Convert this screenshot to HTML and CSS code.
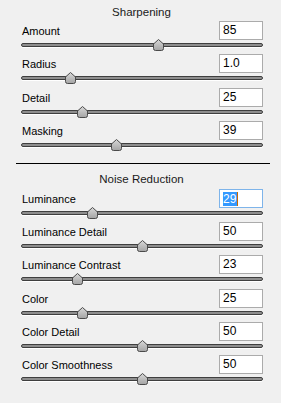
FILE: index.html
```html
<!DOCTYPE html>
<html>
<head>
<meta charset="utf-8">
<link rel="stylesheet" href="styles.css">
</head>
<body>
<svg class="defs" width="0" height="0" aria-hidden="true">
  <defs>
    <linearGradient id="tg" x1="0" y1="0" x2="0" y2="1">
      <stop offset="0" stop-color="#d8d8d8"/>
      <stop offset="1" stop-color="#a4a4a4"/>
    </linearGradient>
    <symbol id="thumb" viewBox="0 0 11 12">
      <path d="M5.5 0.5 L10.5 5 L10.5 9.5 Q10.5 11.5 8.5 11.5 L2.5 11.5 Q0.5 11.5 0.5 9.5 L0.5 5 Z" fill="url(#tg)" stroke="#4a4a4a" stroke-width="1"/>
    </symbol>
  </defs>
</svg>
<div class="panel">
  <div class="section-title first">Sharpening</div>
  <div class="row"><div class="top"><span class="label">Amount</span><span class="field">85</span></div><div class="track"><svg class="thumb" style="--v:0.567"><use href="#thumb"/></svg></div></div>
  <div class="row tall"><div class="top"><span class="label">Radius</span><span class="field">1.0</span></div><div class="track"><svg class="thumb" style="--v:0.2"><use href="#thumb"/></svg></div></div>
  <div class="row"><div class="top"><span class="label">Detail</span><span class="field">25</span></div><div class="track"><svg class="thumb" style="--v:0.25"><use href="#thumb"/></svg></div></div>
  <div class="row"><div class="top"><span class="label">Masking</span><span class="field">39</span></div><div class="track"><svg class="thumb" style="--v:0.39"><use href="#thumb"/></svg></div></div>
  <div class="divider"></div>
  <div class="section-title">Noise Reduction</div>
  <div class="row"><div class="top"><span class="label">Luminance</span><span class="field focused"><span class="sel">29</span><span class="caret"></span></span></div><div class="track"><svg class="thumb" style="--v:0.29"><use href="#thumb"/></svg></div></div>
  <div class="row"><div class="top"><span class="label">Luminance Detail</span><span class="field">50</span></div><div class="track"><svg class="thumb" style="--v:0.5"><use href="#thumb"/></svg></div></div>
  <div class="row tall"><div class="top"><span class="label">Luminance Contrast</span><span class="field">23</span></div><div class="track"><svg class="thumb" style="--v:0.23"><use href="#thumb"/></svg></div></div>
  <div class="row"><div class="top"><span class="label">Color</span><span class="field">25</span></div><div class="track"><svg class="thumb" style="--v:0.25"><use href="#thumb"/></svg></div></div>
  <div class="row"><div class="top"><span class="label">Color Detail</span><span class="field">50</span></div><div class="track"><svg class="thumb" style="--v:0.5"><use href="#thumb"/></svg></div></div>
  <div class="row"><div class="top"><span class="label">Color Smoothness</span><span class="field">50</span></div><div class="track"><svg class="thumb" style="--v:0.5"><use href="#thumb"/></svg></div></div>
</div>
</body>
</html>
```
FILE: styles.css
```css
html, body {
  margin: 0;
  padding: 0;
  background: #f0f0f0;
}
body {
  width: 281px;
  height: 403px;
  overflow: hidden;
  font-family: "Liberation Sans", Arial, sans-serif;
  font-size: 11px;
  color: #000;
}
.defs {
  position: absolute;
  width: 0;
  height: 0;
}
.panel {
  display: flex;
  flex-direction: column;
}
.section-title {
  text-align: center;
  height: 25px;
  line-height: 20px;
  padding-left: 2px;
  box-sizing: border-box;
  padding-top: 5px;
  font-size: 11.5px;
  color: #1a1a1a;
}
.section-title.first {
  height: 21px;
  padding-top: 2px;
}
.row {
  height: 33px;
  padding: 0 18px 0 21px;
  box-sizing: border-box;
  display: flex;
  flex-direction: column;
}
.row.tall {
  height: 34px;
}
.top {
  display: flex;
  justify-content: space-between;
  align-items: center;
  height: 19px;
}
.label {
  padding-left: 1px;
  line-height: 19px;
  padding-top: 1px;
}
.field {
  width: 44px;
  height: 19px;
  box-sizing: border-box;
  border: 1px solid #ababab;
  background: #fff;
  padding-left: 3px;
  line-height: 17px;
  font-size: 12px;
  display: flex;
  align-items: center;
}
.field.focused {
  border-color: #7eb4ea;
}
.sel {
  background: #3399ff;
  color: #fff;
  line-height: 14px;
  height: 14px;
  padding-right: 1px;
}
.caret {
  width: 1px;
  height: 14px;
  background: #c86a00;
}
.track {
  position: relative;
  margin-top: 3px;
  height: 4px;
  box-sizing: border-box;
  border: 1px solid #3f3f3f;
  border-radius: 2px;
  background: #8e8e8e;
  box-shadow: 0 1px 0 #ffffff;
}
.thumb {
  position: absolute;
  top: -5px;
  left: calc(var(--v) * 100% - 5px);
  width: 11px;
  height: 12px;
}
.divider {
  margin: 9px 11px 0 16px;
  height: 1px;
  background: #000;
}
```
